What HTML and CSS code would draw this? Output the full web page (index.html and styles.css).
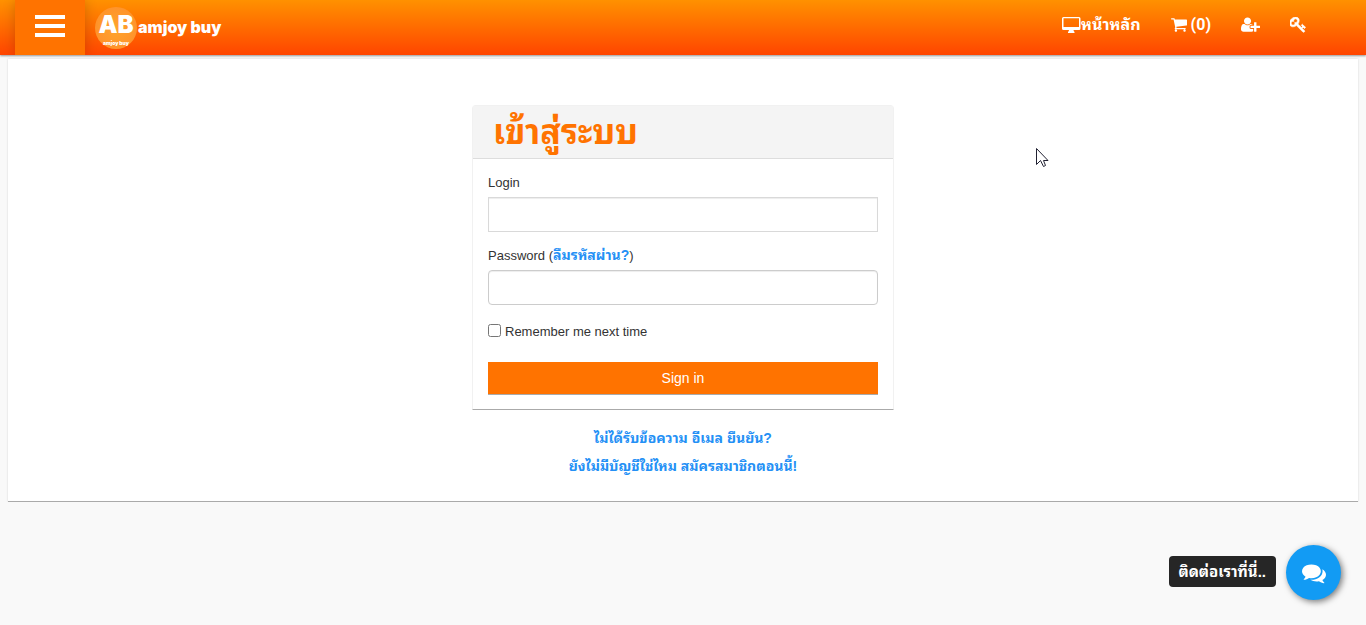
FILE: index.html
```html
<!DOCTYPE html>
<html lang="th">
<head>
<meta charset="utf-8">
<meta name="viewport" content="width=device-width, initial-scale=1">
<title>amjoy buy</title>
<link rel="stylesheet" href="styles.css">
</head>
<body>
<header class="topbar">
  <button class="menu-button" type="button" aria-label="Menu"><span class="bar"></span><span class="bar"></span><span class="bar"></span></button>
  <a class="brand" href="#">
    <span class="brand-mark"><span class="brand-initials">AB</span><span class="brand-small">amjoy buy</span></span>
    <span class="brand-name">amjoy buy</span>
  </a>
  <nav class="nav">
    <a class="nav-link" href="#"><svg width="19" height="16" viewBox="0 0 19 16" aria-hidden="true"><path fill="#fff" fill-rule="evenodd" d="M1.500 0h15.500q1.500 0 1.500 1.500v10q0 1.500-1.500 1.500h-5.500q0 1 1 2v1h-6.500v-1q1-1 1-2H1.500Q0 13 0 11.500v-10Q0 0 1.500 0zM1.500 1.300v8.700h15.500V1.300z"/></svg>หน้าหลัก</a>
    <a class="nav-link" href="#"><svg width="16" height="16" viewBox="64 128 1664 1664" aria-hidden="true"><path fill="#fff" d="M704 1536q0 52-38 90t-90 38-90-38-38-90 38-90 90-38 90 38 38 90zm896 0q0 52-38 90t-90 38-90-38-38-90 38-90 90-38 90 38 38 90zm128-1088v512q0 24-16.500 42.500t-40.500 21.500l-1044 122q13 60 13 70 0 16-24 64h920q26 0 45 19t19 45-19 45-45 19h-1024q-26 0-45-19t-19-45q0-11 8-31.500t16-36 21.500-40 15.500-29.500l-177-823h-204q-26 0-45-19t-19-45 19-45 45-19h256q16 0 28.500 6.500t19.500 15.500 13 24.500 8 26 5.500 29.500 4.500 26h1201q26 0 45 19t19 45z"/></svg><span class="count">(0)</span></a>
    <a class="nav-link" href="#" aria-label="Register"><svg width="19" height="17" viewBox="0 0 2048 1792" aria-hidden="true"><path fill="#fff" d="M704 896q-159 0-271.500-112.500t-112.500-271.500 112.500-271.500 271.500-112.500 271.500 112.500 112.500 271.500-112.500 271.500-271.500 112.500zm960 128h352q13 0 22.500 9.500t9.500 22.500v192q0 13-9.500 22.500t-22.500 9.500h-352v352q0 13-9.500 22.500t-22.500 9.500h-192q-13 0-22.500-9.500t-9.500-22.500v-352h-352q-13 0-22.500-9.500t-9.500-22.500v-192q0-13 9.500-22.500t22.500-9.500h352v-352q0-13 9.500-22.500t22.500-9.500h192q13 0 22.500 9.500t9.500 22.500v352zm-736 224q0 52 38 90t90 38h256v238q-68 50-171 50h-874q-121 0-194-69t-73-190q0-53 3.500-103.500t14-109 26.500-108.500 43-97.500 62-81 85.500-53.500 111.500-20q19 0 39 17 79 61 154.500 91.500t164.500 30.500 164.500-30.500 154.500-91.500q20-17 39-17 132 0 217 96h-223q-52 0-90 38t-38 90v192z"/></svg></a>
    <a class="nav-link" href="#" aria-label="Login"><svg width="16" height="16" viewBox="64 128 1664 1664" aria-hidden="true"><path fill="#fff" stroke="#fff" stroke-width="60" d="M832 512q0-80-56-136t-136-56-136 56-56 136q0 42 19 83-41-19-83-19-80 0-136 56t-56 136 56 136 136 56 136-56 56-136q0-42-19-83 41 19 83 19 80 0 136-56t56-136zm851 704q0 17-49 66t-66 49q-9 0-28.500-16t-36.500-33-38.500-40-24.500-26l-96 96 220 220q28 28 28 68 0 42-39 81t-81 39q-40 0-68-28l-671-671q-176 131-365 131-163 0-265.500-102.500t-102.500-265.500q0-160 95-313t248-248 313-95q163 0 265.500 102.500t102.500 265.500q0 189-131 365l355 355 96-96q-3-3-26-24.500t-40-38.500-33-36.500-16-28.500q0-17 49-66t66-49q13 0 23 10 6 6 46 44.500t82 79.500 86.500 86 73 78 28.500 41z"/></svg></a>
  </nav>
</header>
<main class="page">
  <form class="card">
    <h1 class="card-title">เข้าสู่ระบบ</h1>
    <div class="card-body">
      <label class="label" for="login">Login</label>
      <input class="field square" id="login" type="text">
      <div class="label"><label for="password">Password</label> (<a class="link" href="#">ลืมรหัสผ่าน?</a>)</div>
      <input class="field" id="password" type="password">
      <div class="remember"><input class="check" id="remember" type="checkbox"><label for="remember">Remember me next time</label></div>
      <button class="submit" type="submit">Sign in</button>
    </div>
  </form>
  <div class="links">
    <a class="link" href="#">ไม่ได้รับข้อความ อีเมล ยืนยัน?</a>
    <a class="link" href="#">ยังไม่มีบัญชีใช่ไหม สมัครสมาชิกตอนนี้!</a>
  </div>
</main>
<aside class="contact">
  <span class="contact-tip">ติดต่อเราที่นี่..</span>
  <button class="contact-button" type="button" aria-label="Chat"><svg width="24" height="24" viewBox="0 0 1792 1792" aria-hidden="true"><path fill="#fff" d="M1408 768q0 139-94 257t-256.500 186.500-353.500 68.500q-86 0-176-16-124 88-278 128-36 9-86 16h-3q-11 0-20.500-8t-11.500-21q-1-3-1-6.500t.5-6.500 2-6l2.500-5 3.500-5.500 4-5 4.500-5 4-4.500q5-6 23-25t26-29.500 22.500-29 25-38.500 20.500-44q-124-72-195-177t-71-224q0-139 94-257t256.500-186.500 353.500-68.500 353.500 68.500 256.500 186.500 94 257zm384 256q0 120-71 224.500t-195 176.500q10 24 20.500 44t25 38.500 22.500 29 26 29.500 23 25q1 1 4 4.500t4.500 5 4 5 3.500 5.500l2.500 5 2 6 .5 6.500-1 6.500q-3 14-13 22t-22 7q-50-7-86-16-154-40-278-128-90 16-176 16-271 0-472-132 58 4 88 4 161 0 309-45t264-129q125-92 192-212t67-254q0-77-23-152 129 71 204 178t75 230z"/></svg></button>
</aside>
<svg class="pointer" width="14" height="20" viewBox="0 0 14 20" aria-hidden="true"><path fill="#fff" stroke="#223" stroke-width="1" d="M.5.5v16l4-4 3 6 2-1-2-5h4.500z"/></svg>
</body>
</html>
```
FILE: styles.css
```css
* { box-sizing: border-box; }
body {
  margin: 0;
  background: #f9f9f9;
  color: #333;
  font: 13px/18px "Liberation Sans", "Noto Sans Thai Looped", Loma, Waree, "Noto Sans Thai", "Noto Sans", sans-serif;
}
a { text-decoration: none; }
svg { display: block; flex: none; }
.topbar {
  display: flex;
  height: 55px;
  padding: 0 60px 0 15px;
  background: linear-gradient(#ff9100, #ff4500);
  box-shadow: 0 1px 2px rgba(0, 0, 0, .4);
}
.menu-button {
  display: flex;
  flex-direction: column;
  align-items: center;
  gap: 5px;
  width: 70px;
  padding: 15px 0 0;
  border: 0;
  background: #ff7300;
  box-shadow: 0 0 12px rgba(0, 0, 0, .2);
  clip-path: inset(0 -16px);
}
.bar { width: 30px; height: 4px; background: #fff; }
.brand {
  display: flex;
  align-items: center;
  gap: 1px;
  height: 54px;
  margin-left: 10px;
  color: #fff;
  font-family: Inter, Lato, sans-serif;
  font-weight: 900;
}
.brand-mark {
  display: flex;
  flex-direction: column;
  align-items: center;
  width: 42px;
  height: 42px;
  margin-top: 1px;
  padding-top: 3px;
  border-radius: 50%;
  background: radial-gradient(#ffa52c, #ff8c2b);
}
.brand-initials { font-size: 24px; line-height: 30px; }
.brand-small { font-size: 5px; line-height: 6px; }
.brand-name { font-size: 16px; line-height: 24px; }
.nav { display: flex; gap: 30px; margin-left: auto; height: 49px; align-items: center; }
.nav-link {
  display: flex;
  align-items: center;
  color: #fff;
  font: bold 16px/24px Roboto, "Noto Sans Thai Looped", Loma, Waree, "Noto Sans Thai", sans-serif;
}
.count { margin-left: 4px; }
.page {
  display: flex;
  flex-direction: column;
  align-items: center;
  margin: 4px 8px 0;
  padding: 46px 16px 26px;
  background: #fff;
  border-bottom: 1px solid #aaa;
  box-shadow: 0 0 2px rgba(0, 0, 0, .15);
}
.card {
  width: 100%;
  max-width: 422px;
  border: 1px solid #f1f1f1;
  border-bottom-color: #aaa;
  border-radius: 4px 4px 0 0;
}
.card-title {
  margin: 0;
  padding: 4px 20px;
  border-bottom: 1px solid #ddd;
  background: #f4f4f4;
  color: #ff7300;
  font-size: 34px;
  line-height: 44px;
}
.card-body { padding: 15px 15px 14px; }
.label { display: block; margin-bottom: 5px; }
.field {
  display: block;
  width: 100%;
  height: 35px;
  margin-bottom: 14px;
  padding: 6px 12px;
  border: 1px solid #ccc;
  border-radius: 4px;
  background: #fff;
  box-shadow: inset 0 1px 1px rgba(0, 0, 0, .075);
  font: inherit;
}
.square { border-color: #d9d9d9; border-radius: 0; }
.link { color: #2490f5; font-size: 14px; font-weight: bold; }
.remember { display: flex; align-items: center; gap: 4px; margin: 18px 0 21px; }
.check { width: 13px; height: 13px; margin: 0 0 3px; }
.submit {
  display: block;
  width: 100%;
  height: 33px;
  border: 0;
  border-bottom: 1px solid #aaa;
  background: #ff7300;
  color: #fff;
  font: 14px/20px "Liberation Sans", sans-serif;
}
.links { display: flex; flex-direction: column; align-items: center; gap: 10px; padding-top: 19px; }
.contact { position: fixed; right: 25px; bottom: 25px; display: flex; align-items: center; gap: 10px; }
.contact-tip {
  padding: 6px 10px 5px;
  border-radius: 4px;
  background: #262626;
  color: #fff;
  font-size: 15px;
  line-height: 20px;
  font-weight: bold;
  margin-bottom: 2px;
}
.contact-button {
  display: flex;
  align-items: center;
  justify-content: center;
  width: 55px;
  height: 55px;
  padding: 0;
  border: 0;
  border-radius: 50%;
  background: #129bf4;
  box-shadow: 2px 2px 6px rgba(0, 0, 0, .5);
}
.pointer { position: absolute; left: 1036px; top: 148px; }
```
